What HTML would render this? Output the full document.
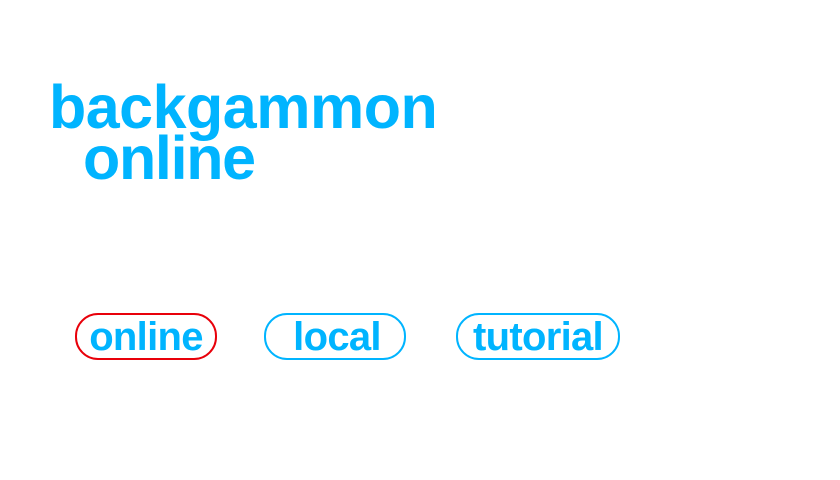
<!DOCTYPE html>
<html><head><style>
body{margin:0;width:840px;height:480px;background:#fff;position:relative;font-family:"Liberation Sans",sans-serif;font-weight:bold;color:#00b4ff;overflow:hidden}
.t{position:absolute;font-size:61px;line-height:61px;white-space:nowrap;letter-spacing:-0.5px}
.b{position:absolute;top:313px;height:43px;border:2px solid #00b4ff;border-radius:23px;box-sizing:content-box}
.b span{position:absolute;top:0;left:0;right:0;text-align:center;font-size:40px;line-height:45px;letter-spacing:-0.7px}
</style></head><body>
<div class="t" style="left:49px;top:77px">backgammon</div>
<div class="t" style="left:83px;top:128px;letter-spacing:-1.3px">online</div>
<div class="b" style="left:75px;width:138px;border-color:#e8000a"><span>online</span></div>
<div class="b" style="left:264px;width:138px"><span style="left:4px">local</span></div>
<div class="b" style="left:456px;width:160px"><span>tutorial</span></div>
</body></html>
